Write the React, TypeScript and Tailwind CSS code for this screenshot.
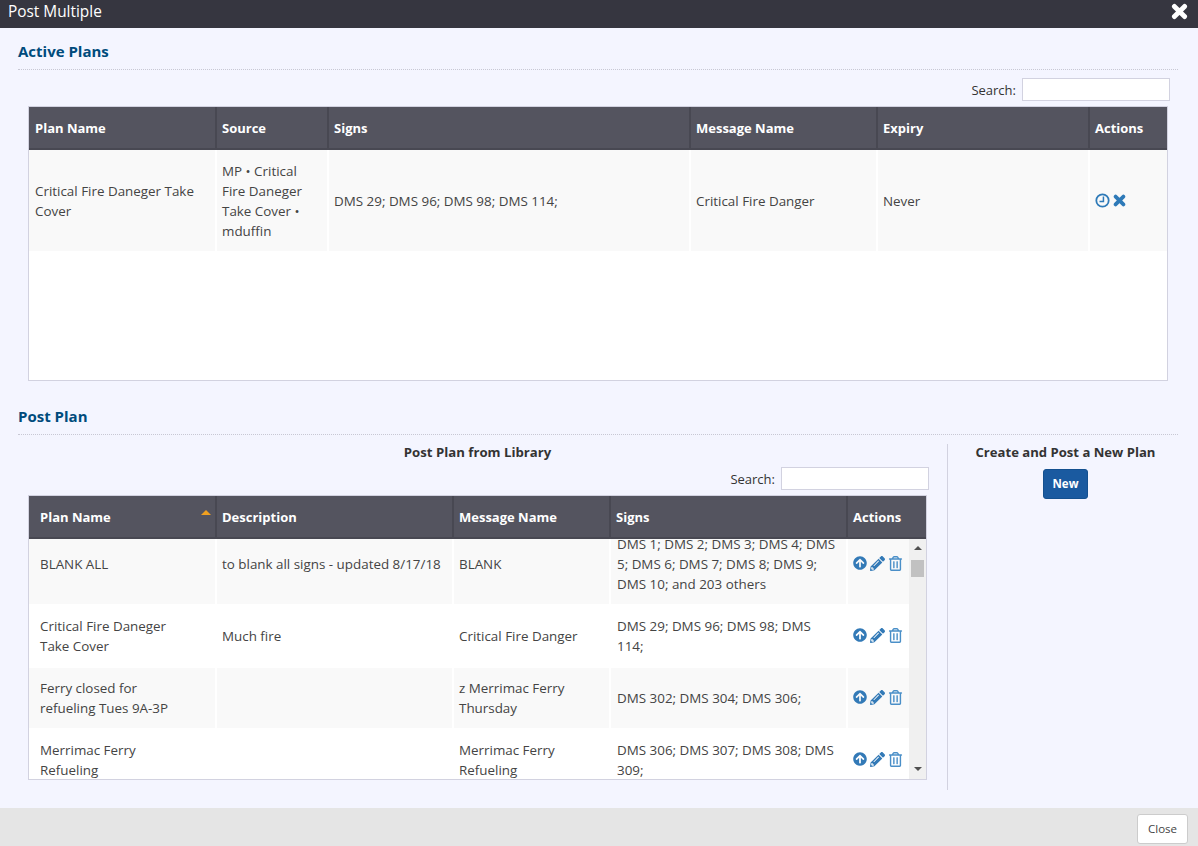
import { FaArrowCircleUp, FaPencilAlt, FaRegTrashAlt } from "react-icons/fa";

const activePlanCols = ["w-[188px]", "w-[112px]", "w-[362px]", "w-[187px]", "w-[212px]", "w-[77px]"];
const libraryCols = ["w-[188px]", "w-[237px]", "w-[157px]", "w-[237px]", "w-[61px]"];

const libraryRows = [
  {
    name: "BLANK ALL",
    description: "to blank all signs - updated 8/17/18",
    message: "BLANK",
    signs: "DMS 1; DMS 2; DMS 3; DMS 4; DMS 5; DMS 6; DMS 7; DMS 8; DMS 9; DMS 10; and 203 others",
    height: "h-[80px]",
    bg: "bg-[#f9f9f9]",
  },
  {
    name: "Critical Fire Daneger Take Cover",
    description: "Much fire",
    message: "Critical Fire Danger",
    signs: "DMS 29; DMS 96; DMS 98; DMS 114;",
    height: "h-[64px]",
    bg: "bg-white",
  },
  {
    name: "Ferry closed for refueling Tues 9A-3P",
    description: "",
    message: "z Merrimac Ferry Thursday",
    signs: "DMS 302; DMS 304; DMS 306;",
    height: "h-[60px]",
    bg: "bg-[#f9f9f9]",
  },
  {
    name: "Merrimac Ferry Refueling",
    description: "",
    message: "Merrimac Ferry Refueling",
    signs: "DMS 306; DMS 307; DMS 308; DMS 309;",
    height: "h-[64px]",
    bg: "bg-white",
  },
];

const RemoveIcon = ({ size }: { size: number }) => (
  <svg width={size} height={size} viewBox="0 0 16 16" fill="none" stroke="currentColor" strokeWidth="4.6" strokeLinecap="round">
    <path d="M3.2 3.2L12.8 12.8M12.8 3.2L3.2 12.8" />
  </svg>
);

const TimeIcon = () => (
  <svg width="15" height="15" viewBox="0 0 16 16" fill="none" stroke="currentColor" strokeWidth="1.9">
    <circle cx="8" cy="8" r="6.6" />
    <path d="M9 3.6V9H4.8" strokeWidth="1.6" />
  </svg>
);

const SectionTitle = ({ children }: { children: string }) => (
  <div className="border-b border-dotted border-[#c8c8d4] h-[29px] text-[15px] leading-[20px] font-bold text-[#004b7c]">
    {children}
  </div>
);

const SearchBox = () => (
  <div className="flex items-center justify-end gap-[6px] text-[13px] text-[#333]">
    <span>Search:</span>
    <div className="w-[148px] h-[23px] bg-white border border-[#d2d2e0]"></div>
  </div>
);

const HeadCell = ({ className, children }: { className: string; children: React.ReactNode }) => (
  <div className={`${className} shrink-0 h-full flex items-center bg-[#54545f] border-r-2 border-[#484852] text-[13px] font-bold text-white last:border-r-0`}>
    {children}
  </div>
);

const BodyCell = ({ className, children }: { className: string; children?: React.ReactNode }) => (
  <div className={`${className} shrink-0 h-full flex items-center border-r-2 border-white`}>
    <span>{children}</span>
  </div>
);

const App = () => {
  return (
    <div className="w-[1198px] h-[846px] flex flex-col overflow-hidden bg-[#f4f5ff] text-[#444] text-[13.4px] leading-[20px] font-['Open_Sans','Noto_Sans',sans-serif]">
      <div className="h-[28px] shrink-0 bg-[#363640] flex items-center justify-between pl-[8px] pr-[10px] pb-[5px] text-white">
        <span className="text-[15.4px]">Post Multiple</span>
        <RemoveIcon size={17} />
      </div>

      <div className="flex-1 min-h-0 pl-[18px] pr-[20px] pt-[13px]">
        <SectionTitle>Active Plans</SectionTitle>
        <div className="pr-[8px] mt-[8px]">
          <SearchBox />
        </div>
        <div className="ml-[10px] mr-[10px] mt-[5px] h-[275px] bg-white border border-[#d2d2e0]">
          <div className="flex h-[43px] bg-[#484852] pb-[2px]">
            {["Plan Name", "Source", "Signs", "Message Name", "Expiry", "Actions"].map((h, i) => (
              <HeadCell key={h} className={`${activePlanCols[i]} ${i < 1 ? "pl-[6px]" : "pl-[5px]"} pr-[5px]`}>{h}</HeadCell>
            ))}
          </div>
          <div className="flex h-[101px] bg-[#f9f9f9]">
            <BodyCell className={`${activePlanCols[0]} px-[6px]`}>Critical Fire Daneger Take Cover</BodyCell>
            <BodyCell className={`${activePlanCols[1]} pl-[5px] pr-[7px]`}>MP • Critical Fire Daneger Take Cover • mduffin</BodyCell>
            <BodyCell className={`${activePlanCols[2]} px-[5px]`}>DMS 29; DMS 96; DMS 98; DMS 114;</BodyCell>
            <BodyCell className={`${activePlanCols[3]} px-[5px]`}>Critical Fire Danger</BodyCell>
            <BodyCell className={`${activePlanCols[4]} px-[5px]`}>Never</BodyCell>
            <div className={`${activePlanCols[5]} shrink-0 flex items-center gap-[3px] pl-[5px] text-[#2e7ab8]`}>
              <TimeIcon />
              <RemoveIcon size={13} />
            </div>
          </div>
        </div>

        <div className="mt-[25px]">
          <SectionTitle>Post Plan</SectionTitle>
        </div>

        <div className="flex mt-[9px]">
          <div className="w-[930px] shrink-0 flex flex-col h-[346px] border-r border-[#d2d2e0] pr-[18px]">
            <div className="w-[919px] text-center text-[13.2px] font-bold text-[#333] leading-[16px]">Post Plan from Library</div>
            <div className="w-[911px] mt-[7px]">
              <SearchBox />
            </div>
            <div className="ml-[10px] w-[899px] mt-[5px] h-[285px] bg-white border border-[#d2d2e0] flex flex-col overflow-hidden">
              <div className="flex h-[43px] shrink-0 bg-[#484852] pb-[2px]">
                <HeadCell className={`${libraryCols[0]} pl-[11px] pr-[6px] relative`}>
                  Plan Name
                  <span className="absolute right-[4px] top-[14px] w-0 h-0 border-x-[5px] border-x-transparent border-b-[5px] border-b-[#f0a020]"></span>
                </HeadCell>
                <HeadCell className={`${libraryCols[1]} px-[5px]`}>Description</HeadCell>
                <HeadCell className={`${libraryCols[2]} px-[5px]`}>Message Name</HeadCell>
                <HeadCell className={`${libraryCols[3]} px-[5px]`}>Signs</HeadCell>
                <HeadCell className="w-[78px] px-[5px]">Actions</HeadCell>
              </div>
              <div className="flex flex-1 min-h-0">
                <div className="w-[880px] shrink-0 overflow-hidden">
                  <div className="-mt-[15px]">
                    {libraryRows.map((row) => (
                      <div key={row.name} className={`flex ${row.height} ${row.bg}`}>
                        <BodyCell className={`${libraryCols[0]} pl-[11px] pr-[22px]`}>{row.name}</BodyCell>
                        <BodyCell className={`${libraryCols[1]} px-[5px]`}>{row.description}</BodyCell>
                        <BodyCell className={`${libraryCols[2]} px-[5px]`}>{row.message}</BodyCell>
                        <BodyCell className={`${libraryCols[3]} pl-[6px] pr-[6px]`}>{row.signs}</BodyCell>
                        <div className={`${libraryCols[4]} shrink-0 flex items-center gap-[3px] pl-[5px] pb-[2px] text-[#337ab7]`}>
                          <FaArrowCircleUp size={14} />
                          <FaPencilAlt size={15} />
                          <FaRegTrashAlt size={15} className="text-[#4a8fc8]" />
                        </div>
                      </div>
                    ))}
                  </div>
                </div>
                <div className="w-[17px] shrink-0 bg-[#f0f0f0] flex flex-col items-center pt-[7px] pb-[8px]">
                  <span className="w-0 h-0 border-x-[4px] border-x-transparent border-b-[4px] border-b-[#505050]"></span>
                  <span className="w-[13px] h-[17px] mt-[10px] bg-[#c1c1c1]"></span>
                  <span className="mt-auto w-0 h-0 border-x-[4px] border-x-transparent border-t-[4px] border-t-[#505050]"></span>
                </div>
              </div>
            </div>
          </div>
          <div className="flex-1 flex flex-col items-center pl-[5px]">
            <div className="text-[13.1px] font-bold text-[#333] leading-[16px]">Create and Post a New Plan</div>
            <button className="mt-[9px] w-[45px] h-[30px] bg-[#1a5aa0] border border-[#14508f] rounded-[3px] text-white text-[11.5px] font-bold">
              New
            </button>
          </div>
        </div>
      </div>

      <div className="h-[38px] shrink-0 bg-[#e5e5e5] flex justify-end items-start pt-[6px] pr-[10px]">
        <button className="w-[51px] h-[30px] bg-white border border-[#ccc] rounded-[3px] text-[11.5px] text-[#444]">
          Close
        </button>
      </div>
    </div>
  );
};

export default App;
